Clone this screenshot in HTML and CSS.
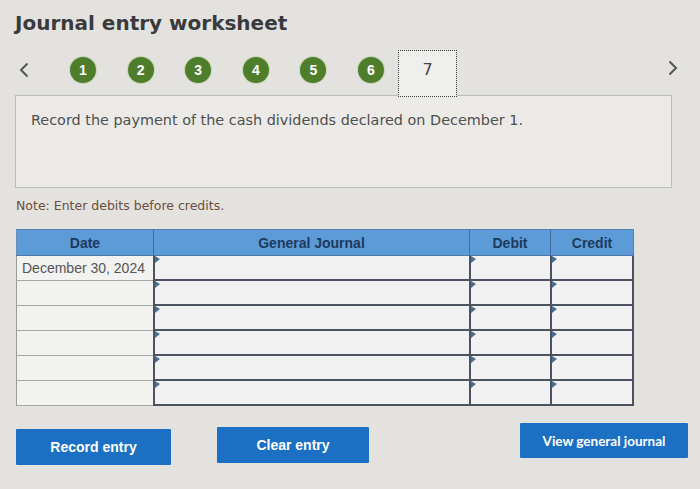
FILE: index.html
```html
<!DOCTYPE html>
<html lang="en">
<head>
<meta charset="utf-8">
<title>Journal entry worksheet</title>
<link rel="stylesheet" href="styles.css">
</head>
<body>
<div class="page">
  <h1 class="title">Journal entry worksheet</h1>
  <nav class="steps">
    <span class="chev chev-left"><svg width="10" height="16" viewBox="0 0 10 16"><polyline points="8.5,1.5 2,8 8.5,14.5" fill="none" stroke="#555" stroke-width="2"/></svg></span>
    <span class="step done">1</span>
    <span class="step done">2</span>
    <span class="step done">3</span>
    <span class="step done">4</span>
    <span class="step done">5</span>
    <span class="step done">6</span>
    <span class="step current">7</span>
    <span class="chev chev-right"><svg width="10" height="16" viewBox="0 0 10 16"><polyline points="1.5,1.5 8,8 1.5,14.5" fill="none" stroke="#555" stroke-width="2"/></svg></span>
  </nav>
  <div class="prompt">Record the payment of the cash dividends declared on December 1.</div>
  <p class="note">Note: Enter debits before credits.</p>
  <div class="journal">
    <div class="th first">Date</div>
    <div class="th">General Journal</div>
    <div class="th">Debit</div>
    <div class="th last">Credit</div>

    <div class="dc">December 30, 2024</div><div class="ec"></div><div class="ec"></div><div class="ec last"></div>
    <div class="dc"></div><div class="ec"></div><div class="ec"></div><div class="ec last"></div>
    <div class="dc"></div><div class="ec"></div><div class="ec"></div><div class="ec last"></div>
    <div class="dc"></div><div class="ec"></div><div class="ec"></div><div class="ec last"></div>
    <div class="dc"></div><div class="ec"></div><div class="ec"></div><div class="ec last"></div>
    <div class="dc"></div><div class="ec"></div><div class="ec"></div><div class="ec last"></div>
  </div>
  <div class="actions">
    <button class="btn btn-record">Record entry</button>
    <button class="btn btn-clear">Clear entry</button>
    <button class="btn btn-view">View general journal</button>
  </div>
</div>
</body>
</html>
```

FILE: styles.css
```css
html, body {
  margin: 0;
  padding: 0;
}
body {
  background: #e3e2de;
  width: 700px;
  height: 489px;
  overflow: hidden;
  font-family: "DejaVu Sans", Verdana, sans-serif;
}
.page {
  display: flex;
  flex-direction: column;
}
.title {
  margin: 11px 0 0 15px;
  font-size: 20px;
  line-height: 24px;
  font-weight: bold;
  color: #3a3a3c;
}
.steps {
  margin-top: 15px;
  height: 45px;
  display: flex;
  align-items: flex-start;
  padding: 0 22px 0 19px;
}
.chev {
  display: block;
  width: 10px;
  height: 16px;
}
.chev svg {
  display: block;
}
.chev-left {
  margin-top: 12px;
  margin-right: 41px;
}
.chev-right {
  margin-left: auto;
  margin-top: 10px;
}
.step {
  display: flex;
  align-items: center;
  justify-content: center;
  box-sizing: border-box;
}
.step.done {
  width: 26px;
  height: 26px;
  margin-top: 7px;
  border-radius: 50%;
  background: #4e7d2b;
  box-shadow: 0 0 0 1px #c9d6b8;
  color: #fff;
  font-family: "Liberation Sans", Arial, sans-serif;
  font-weight: bold;
  font-size: 14px;
}
.step.done + .step.done {
  margin-left: 31.6px;
}
.step.current {
  position: relative;
  z-index: 1;
  margin-left: 14px;
  width: 59px;
  height: 47px;
  align-items: flex-start;
  padding-top: 9px;
  border: 1px dotted #3a3a3a;
  background: #efefed;
  color: #444;
  font-size: 16px;
  line-height: 19px;
}
.prompt {
  box-sizing: border-box;
  margin-left: 15px;
  width: 657px;
  height: 93px;
  border: 1px solid #bcbcba;
  background: #ebeae7;
  padding: 16px 15px;
  font-size: 14.4px;
  color: #4f4f4f;
}
.note {
  margin: 10px 0 0 16px;
  font-size: 12.5px;
  line-height: 15px;
  color: #6a4f40;
}
.journal {
  margin: 16px 0 0 16px;
  width: 618px;
  display: grid;
  grid-template-columns: 137px 316px 81px 84px;
  grid-template-rows: 27px repeat(6, 25px);
  font-family: "Liberation Sans", Arial, sans-serif;
}
.th {
  box-sizing: border-box;
  display: flex;
  align-items: center;
  justify-content: center;
  background: #5c9bd7;
  color: #1e3a5d;
  font-weight: bold;
  font-size: 14px;
  border-top: 1px solid #4d80b6;
  border-left: 1px solid #3f6c9c;
  border-bottom: 1px solid #4a77a8;
}
.th.first {
  border-left-color: #6a8fb3;
}
.th.last {
  border-right: 1px solid #4d80b6;
}
.dc {
  box-sizing: border-box;
  display: flex;
  align-items: center;
  padding-left: 5px;
  background: #f2f2f0;
  border-left: 1px solid #9c9c9a;
  border-bottom: 1px solid #a6a6a4;
  color: #555;
  font-size: 14px;
}
.ec {
  position: relative;
  box-sizing: border-box;
  background: #f1f1f1;
  border-left: 2px solid #4b5361;
  border-bottom: 2px solid #4b5361;
}
.ec.last {
  border-right: 2px solid #4b5361;
}
.ec::before {
  content: "";
  position: absolute;
  left: 0;
  top: 0;
  width: 0;
  height: 0;
  border-left: 5px solid #4a6d94;
  border-top: 3px solid transparent;
  border-bottom: 4px solid transparent;
}
.actions {
  margin-top: 17px;
  display: flex;
  align-items: flex-start;
  padding: 0 12px 0 16px;
}
.btn {
  border: none;
  border-radius: 1px;
  background: #1c70c3;
  color: #fff;
  font-family: "Liberation Sans", Arial, sans-serif;
  font-weight: bold;
  font-size: 14px;
  padding: 0;
  cursor: pointer;
}
.btn-record {
  width: 155px;
  height: 36px;
  margin-top: 6px;
}
.btn-clear {
  width: 152px;
  height: 36px;
  margin-top: 4px;
  margin-left: 46px;
}
.btn-view {
  width: 168px;
  height: 35px;
  margin-left: auto;
  font-family: Lato, "Liberation Sans", sans-serif;
  font-size: 13.5px;
}
```
